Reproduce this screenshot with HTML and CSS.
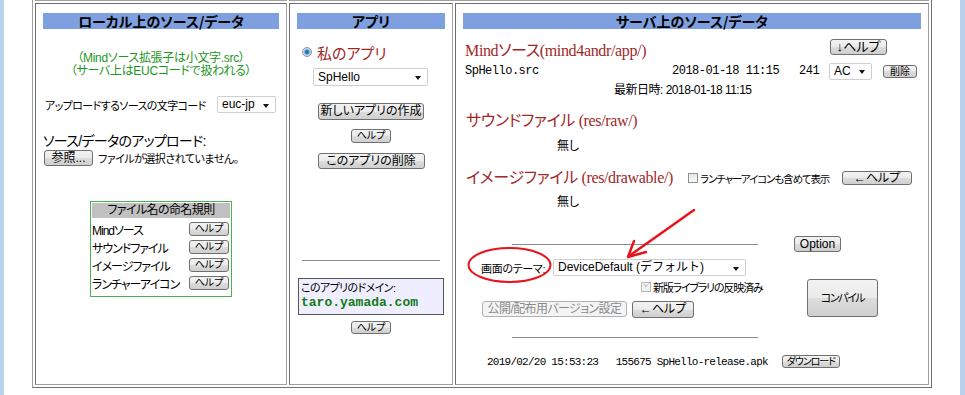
FILE: index.html
```html
<!DOCTYPE html>
<html lang="ja">
<head>
  <meta charset="UTF-8" />
  <title>Mind for Android - アプリ開発</title>
  <link rel="stylesheet" href="styles.css">
</head>
<body>

  <table class="layout">
    <colgroup>
      <col class="c-local">
      <col class="c-app">
      <col class="c-server">
    </colgroup>
    <!-- previous row (cut off above) -->
    <tr class="prev-row">
      <td></td>
      <td colspan="2"></td>
    </tr>
    <tr>
      <!-- Local -->
      <td>
        <div class="pane pane-local">
          <h2 class="pane-title">ローカル上のソース/データ</h2>
          <div class="note">
            <div class="note-line">（Mindソース拡張子は小文字.src）</div>
            <div class="note-line">（サーバ上はEUCコードで扱われる）</div>
          </div>
          <div class="encoding">
            <label class="encoding-label">アップロードするソースの文字コード</label>
            <span class="select-wrap"><select class="sel sel-enc"><option>euc-jp</option></select></span>
          </div>
          <div class="upload-label">ソース/データのアップロード:</div>
          <div class="upload">
            <button class="btn btn-browse">参照...</button>
            <span class="upload-file">ファイルが選択されていません。</span>
          </div>
          <div class="rules">
            <div class="rules-title">ファイル名の命名規則</div>
            <div class="rules-row"><span>Mindソース</span><button class="btn btn-mini">ヘルプ</button></div>
            <div class="rules-row"><span>サウンドファイル</span><button class="btn btn-mini">ヘルプ</button></div>
            <div class="rules-row"><span>イメージファイル</span><button class="btn btn-mini">ヘルプ</button></div>
            <div class="rules-row"><span>ランチャーアイコン</span><button class="btn btn-mini">ヘルプ</button></div>
          </div>
        </div>
      </td>

      <!-- App -->
      <td>
        <div class="pane pane-app">
          <h2 class="pane-title">アプリ</h2>
          <label class="my-app"><input type="radio" class="radio" checked>私のアプリ</label>
          <span class="select-wrap sel-app-wrap"><select class="sel sel-app"><option>SpHello</option></select></span>
          <button class="btn btn-new">新しいアプリの作成</button>
          <button class="btn btn-help">ヘルプ</button>
          <button class="btn btn-del">このアプリの削除</button>
          <hr class="rule rule-app">
          <div class="domain">
            <div class="domain-label">このアプリのドメイン:</div>
            <div class="domain-name">taro.yamada.com</div>
          </div>
          <button class="btn btn-help btn-help2">ヘルプ</button>
        </div>
      </td>

      <!-- Server -->
      <td>
        <div class="pane pane-server">
          <h2 class="pane-title">サーバ上のソース/データ</h2>
          <div class="srv-head">
            <h3 class="srv-title srv-mind">Mindソース(mind4andr/app/)</h3>
            <button class="btn btn-dhelp">↓ヘルプ</button>
          </div>
          <div class="srv-file">
            <span class="mono file-name">SpHello.src</span>
            <span class="mono file-date">2018-01-18 11:15</span>
            <span class="mono file-size">241</span>
            <span class="select-wrap"><select class="sel sel-code"><option>AC</option></select></span>
            <button class="btn btn-tiny btn-rm">削除</button>
          </div>
          <div class="srv-latest">最新日時: 2018-01-18 11:15</div>
          <h3 class="srv-title srv-sound">サウンドファイル (res/raw/)</h3>
          <div class="none">無し</div>
          <div class="srv-image">
            <h3 class="srv-title srv-image-title">イメージファイル (res/drawable/)</h3>
            <label class="chk-label chk-launcher"><input type="checkbox" class="chk">ランチャーアイコンも含めて表示</label>
            <button class="btn btn-lhelp">←ヘルプ</button>
          </div>
          <div class="none none2">無し</div>
          <div class="option-row">
            <hr class="rule rule-srv">
            <button class="btn btn-option">Option</button>
          </div>
          <div class="theme-row">
            <label class="theme-label">画面のテーマ:</label>
            <span class="select-wrap"><select class="sel sel-theme"><option>DeviceDefault (デフォルト)</option></select></span>
          </div>
          <div class="build">
            <div class="build-left">
              <label class="chk-label chk-done"><input type="checkbox" class="chk" checked disabled>新版ライブラリの反映済み</label>
              <div class="build-btns">
                <button class="btn btn-release" disabled>公開/配布用バージョン設定</button>
                <button class="btn btn-bhelp">←ヘルプ</button>
              </div>
            </div>
            <button class="btn btn-compile">コンパイル</button>
          </div>
          <hr class="rule rule-srv rule-apk">
          <div class="apk-row">
            <span class="mono apk">2019/02/20 15:53:23&nbsp;&nbsp;&nbsp;155675 SpHello-release.apk</span>
            <button class="btn btn-tiny btn-dl">ダウンロード</button>
          </div>
        </div>
      </td>
    </tr>
  </table>

  <!-- red annotation drawn over the page -->
  <svg class="annotation" width="965" height="395" viewBox="0 0 965 395">
    <ellipse cx="509.5" cy="265" rx="41" ry="17" fill="none" stroke="#e8141c" stroke-width="2"/>
    <line x1="694" y1="210" x2="629" y2="256" stroke="#e8141c" stroke-width="2.5" stroke-linecap="round"/>
    <polyline points="634,241 628,257 646,252" fill="none" stroke="#e8141c" stroke-width="2.5" stroke-linecap="round" stroke-linejoin="round"/>
  </svg>

</body>
</html>
```

FILE: styles.css
```css
/* General */
body {
  margin: 0;
  min-height: 395px;
  box-sizing: border-box;
  border-left: 4px solid #b9d1ea;
  border-right: 5px solid #b9d1ea;
  font-family: "Liberation Sans", "Noto Sans CJK JP", sans-serif;
  font-size: 12px;
  font-feature-settings: "palt";
  color: #000;
  overflow: hidden;
}

/* Layout table */
.layout {
  border-collapse: separate;
  border-spacing: 2px;
  border: 1px solid;
  border-color: #a0a0a0 #6e6e6e #6e6e6e #a0a0a0;
  margin: -12px 0 0 28px;
  table-layout: fixed;
  width: 900px;
}
.layout td {
  border: 1px solid;
  border-color: #6e6e6e #a0a0a0 #a0a0a0 #6e6e6e;
  padding: 9px 7px;
  vertical-align: top;
}
.c-local { width: 252px; }
.c-app { width: 164px; }
.c-server { width: 474px; }
.prev-row td {
  padding: 0;
  height: 8px;
}
.pane {
  height: 362px;
}
.pane-title {
  margin: 0;
  height: 16px;
  line-height: 16px;
  background: #7fa0e0;
  font-family: "Noto Sans CJK JP", sans-serif;
  font-size: 14px;
  font-weight: bold;
  text-align: center;
}

/* Buttons */
.btn {
  font-family: "Liberation Sans", "Noto Sans CJK JP", sans-serif;
  font-feature-settings: "palt";
  font-size: 12px;
  color: #000;
  border: 1px solid #707070;
  border-radius: 3px;
  background: linear-gradient(#f2f2f2, #ebebeb 50%, #dddddd 50%, #cfcfcf);
  padding: 0;
  height: 17px;
  line-height: 15px;
  box-sizing: border-box;
  white-space: nowrap;
  flex: none;
}
.btn:disabled {
  color: #8a8a8a;
  border-color: #adb2b5;
  background: #f4f4f4;
}
.btn-mini,
.btn-help {
  width: 40px;
  height: 14px;
  line-height: 12px;
  font-size: 10px;
}
.btn-tiny {
  height: 13px;
  line-height: 11px;
  font-size: 10px;
}

/* Selects */
.select-wrap {
  position: relative;
  display: inline-block;
  flex: none;
}
.select-wrap::after {
  content: "";
  position: absolute;
  right: 7px;
  top: 50%;
  margin-top: -1px;
  border-left: 3.5px solid transparent;
  border-right: 3.5px solid transparent;
  border-top: 4px solid #111;
}
.sel {
  appearance: none;
  -webkit-appearance: none;
  display: block;
  border: 1px solid #cfcfcf;
  border-radius: 2px;
  background: #fff;
  font-family: "Liberation Sans", "Noto Sans CJK JP", sans-serif;
  font-size: 12px;
  color: #000;
  padding: 0 4px;
  height: 17px;
  line-height: 15px;
  box-sizing: border-box;
}

/* Checkbox & radio */
.chk,
.radio {
  appearance: none;
  -webkit-appearance: none;
  margin: 0 3px 0 0;
  width: 10px;
  height: 10px;
  box-sizing: border-box;
  border: 1px solid #8e8f8f;
  background: linear-gradient(#e6e6e6, #fafafa);
  flex: none;
  position: relative;
}
.chk:checked::after {
  content: "✓";
  position: absolute;
  left: 0;
  top: -4px;
  font-size: 10px;
  color: #9a9a9a;
}
.chk:disabled {
  border-color: #b8b8b8;
  background: #f2f2f2;
}
.radio {
  border-radius: 50%;
  background: radial-gradient(circle, #1c5fa8 0, #3a8ad0 2px, #a8cdef 3px, #e8e8e8 4px);
  margin-right: 5px;
}
.mono {
  font-family: "Liberation Mono", monospace;
  font-feature-settings: normal;
}

/* Local pane */
.note {
  margin-top: 23px;
  text-align: center;
  color: #1c961c;
  letter-spacing: -0.3px;
}
.note-line {
  height: 13px;
  line-height: 13px;
}
.encoding {
  display: flex;
  align-items: center;
  margin-top: 18px;
  padding-left: 2px;
}
.encoding-label {
  width: 172px;
  flex: none;
  font-size: 11px;
  letter-spacing: -0.6px;
  white-space: nowrap;
}
.sel-enc {
  width: 59px;
}
.upload-label {
  margin-top: 20px;
  font-size: 14px;
  line-height: 16px;
  letter-spacing: -0.7px;
}
.upload {
  display: flex;
  align-items: center;
  margin-top: 1px;
  padding-left: 1px;
}
.btn-browse {
  width: 49px;
  height: 16px;
  line-height: 14px;
}
.upload-file {
  margin-left: 5px;
  font-size: 11px;
  letter-spacing: -0.5px;
}
.rules {
  width: 142px;
  box-sizing: border-box;
  margin: 35px auto 0;
  border: 1px solid #4caf50;
  padding: 1px 1px 4px;
}
.rules-title {
  background: #c0c0c0;
  text-align: center;
  height: 15px;
  line-height: 15px;
  margin-bottom: 2px;
  letter-spacing: -0.6px;
}
.rules-row {
  display: flex;
  justify-content: space-between;
  align-items: center;
  height: 18px;
  padding-right: 1px;
  letter-spacing: -1px;
  white-space: nowrap;
}
.rules-row .btn {
  letter-spacing: 0;
}

/* App pane */
.pane-app {
  display: flex;
  flex-direction: column;
  align-items: center;
}
.pane-app .pane-title {
  align-self: stretch;
}
.my-app {
  align-self: flex-start;
  display: flex;
  align-items: center;
  height: 18px;
  margin: 14px 0 0 5px;
  font-family: "Liberation Serif", "Noto Sans CJK JP", serif;
  font-size: 15px;
  color: #a02828;
}
.sel-app-wrap {
  align-self: flex-start;
  margin: 7px 0 0 16px;
}
.sel-app {
  width: 115px;
  height: 18px;
  line-height: 16px;
}
.btn-new {
  width: 106px;
  margin-top: 17px;
}
.pane-app .btn-help {
  margin-top: 9px;
}
.btn-del {
  width: 107px;
  height: 16px;
  line-height: 14px;
  margin-top: 10px;
}
.rule {
  border: 0;
  border-top: 1px solid #8c8c8c;
  height: 0;
  margin: 0;
}
.rule-app {
  width: 138px;
  margin-top: 91px;
}
.domain {
  align-self: stretch;
  margin: 17px 1px 0;
  height: 37px;
  box-sizing: border-box;
  border: 1px solid #555;
  background: #eeeeff;
  padding: 2px 2px 0;
}
.domain-label {
  line-height: 14px;
  font-size: 11px;
  letter-spacing: -0.6px;
}
.domain-name {
  font-family: "Liberation Mono", monospace;
  font-weight: bold;
  font-size: 13px;
  line-height: 16px;
  color: #157a15;
}
.pane-app .btn-help2 {
  margin-top: 6px;
  height: 13px;
  line-height: 11px;
}

/* Server pane */
.srv-title {
  margin: 0;
  font-family: "Liberation Serif", "Noto Sans CJK JP", serif;
  font-weight: normal;
  font-size: 16px;
  line-height: 20px;
  letter-spacing: -0.35px;
  color: #a02828;
  white-space: nowrap;
}
.srv-head {
  display: flex;
  align-items: flex-start;
  margin-top: 10px;
  padding-left: 2px;
}
.srv-mind {
  padding-top: 2px;
}
.btn-dhelp {
  margin: 0 34px 0 auto;
  width: 57px;
  height: 16px;
  line-height: 14px;
  font-size: 13px;
}
.srv-file {
  display: flex;
  align-items: center;
  margin-top: 1px;
  padding-left: 2px;
  height: 18px;
}
.file-name,
.file-date,
.file-size {
  font-size: 12px;
  letter-spacing: -0.5px;
  flex: none;
}
.file-name { width: 207px; }
.file-date { width: 127px; }
.file-size { width: 30px; }
.sel-code {
  width: 43px;
}
.btn-rm {
  width: 34px;
  margin-left: 11px;
}
.srv-latest {
  margin-top: 3px;
  padding-left: 151px;
  line-height: 14px;
  letter-spacing: -0.5px;
}
.srv-sound {
  margin-top: 14px;
  padding-left: 3px;
}
.none {
  margin-top: 8px;
  padding-left: 94px;
  line-height: 14px;
}
.none2 {
  margin-top: 7px;
}
.srv-image {
  display: flex;
  align-items: center;
  margin-top: 15px;
  padding-left: 3px;
  height: 20px;
}
.srv-image-title {
  width: 222px;
  flex: none;
}
.chk-label {
  display: flex;
  align-items: center;
  white-space: nowrap;
}
.chk-label .chk {
  margin-right: 2px;
}
.chk-launcher {
  font-size: 10.5px;
  letter-spacing: -1.1px;
}
.btn-lhelp {
  width: 70px;
  height: 14px;
  line-height: 12px;
  margin-left: auto;
  margin-right: 9px;
}
.option-row {
  display: flex;
  align-items: center;
  margin-top: 27px;
  padding-left: 49px;
  height: 16px;
}
.rule-srv {
  width: 246px;
  flex: none;
}
.btn-option {
  width: 47px;
  height: 16px;
  line-height: 14px;
  margin-left: 36px;
  font-family: "Liberation Sans", sans-serif;
}
.theme-row {
  display: flex;
  align-items: center;
  margin-top: 7px;
  padding-left: 18px;
}
.theme-label {
  width: 72px;
  flex: none;
  font-size: 11px;
  letter-spacing: -0.3px;
  white-space: nowrap;
}
.sel-theme {
  width: 193px;
}
.build {
  display: flex;
  margin-top: 3px;
}
.build-left {
  width: 344px;
  flex: none;
}
.chk-done {
  margin-top: 1px;
  padding-left: 178px;
  height: 14px;
  font-size: 11px;
  letter-spacing: -1.2px;
}
.build-btns {
  display: flex;
  margin-top: 7px;
  padding-left: 19px;
}
.btn-release {
  width: 145px;
  height: 16px;
  line-height: 14px;
  letter-spacing: -0.6px;
}
.btn-bhelp {
  width: 62px;
  margin-left: 5px;
}
.btn-compile {
  width: 71px;
  height: 38px;
  line-height: 36px;
  font-size: 11px;
  letter-spacing: -1.4px;
}
.rule-apk {
  margin: 19px 0 0 49px;
}
.apk-row {
  display: flex;
  align-items: center;
  margin-top: 17px;
  padding-left: 24px;
}
.apk {
  font-size: 11px;
  letter-spacing: -0.75px;
}
.btn-dl {
  width: 58px;
  margin-left: 14px;
  letter-spacing: -1px;
}

/* Annotation overlay */
.annotation {
  position: absolute;
  left: 0;
  top: 0;
  pointer-events: none;
}
```
